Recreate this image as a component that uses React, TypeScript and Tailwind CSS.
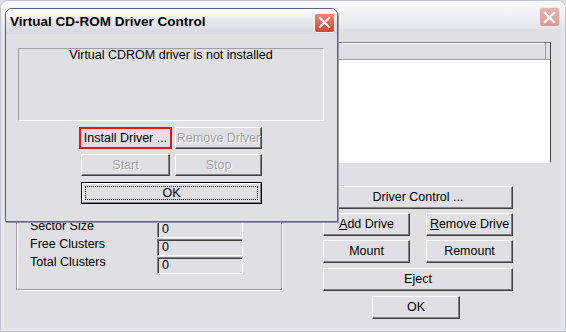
import type { ReactNode } from 'react';

function Btn({
  children,
  className = '',
  disabled = false,
}: {
  children: ReactNode;
  className?: string;
  disabled?: boolean;
}) {
  return (
    <div
      className={`flex items-center justify-center bg-[#e0dfe3] border border-t-white border-l-white border-r-[#404040] border-b-[#404040] shadow-[inset_-1px_-1px_0_#808080] ${
        disabled ? 'text-[#a0a0a0] [text-shadow:1px_1px_0_#ffffff]' : 'text-black'
      } ${className}`}
    >
      {children}
    </div>
  );
}

function DefaultBtn({ children, className = '' }: { children: ReactNode; className?: string }) {
  return (
    <div className={`flex border border-black ${className}`}>
      <div className="relative flex flex-1 items-center justify-center bg-[#e0dfe3] border border-t-white border-l-white border-r-[#808080] border-b-[#808080]">
        <span className="absolute inset-[2px] border border-dotted border-black" />
        <span className="relative">{children}</span>
      </div>
    </div>
  );
}

function CloseX({ faded = false }: { faded?: boolean }) {
  return (
    <div
      className={`flex items-center justify-center w-[21px] h-[20px] rounded-[3px] border ${
        faded
          ? 'border-[#f4e4e4] bg-[linear-gradient(to_bottom,#e8b4b0,#d89890)]'
          : 'border-[#f2f2f2] bg-[linear-gradient(to_bottom,#e98a78,#d0452f)]'
      }`}
    >
      <svg width="13" height="13" viewBox="0 0 13 13">
        <path d="M2 2L11 11M11 2L2 11" stroke="white" strokeWidth="2.2" strokeLinecap="square" />
      </svg>
    </div>
  );
}

function Field({ label, value }: { label: string; value: string }) {
  return (
    <div className="flex items-start h-[17px]">
      <span className="w-[127px] leading-[10px]">{label}</span>
      <div className="w-[86px] h-[17px] border border-t-[#808080] border-l-[#808080] border-r-white border-b-white shadow-[inset_1px_1px_0_#404040] pl-[4px] leading-[15px]">
        {value}
      </div>
    </div>
  );
}

export default function App() {
  return (
    <div className="relative w-[566px] h-[332px] overflow-hidden bg-[#e0dfe3] font-['Liberation_Sans',Arial,sans-serif] text-[12.5px] text-black">
      {/* Background window (inactive) */}
      <div className="flex flex-col w-full h-full rounded-t-[8px] border border-[#c4c4d0]">
        <div className="flex justify-end items-start h-[28px] pt-[6px] pr-[5px] rounded-t-[7px] bg-[linear-gradient(to_bottom,#fdfdfe,#eeeef3_60%,#e4e4eb)]">
          <CloseX faded />
        </div>
        <div className="flex flex-1 border-x-[3px] border-b-[3px] border-[#e6e6ec] bg-[#e0dfe3]">
          {/* Left column */}
          <div className="w-[319px] pl-[12px] pt-[12px]">
            <div className="flex flex-col justify-end w-[266px] h-[249px] border border-[#a0a0a0] shadow-[1px_1px_0_#ffffff,inset_1px_1px_0_#ffffff] pl-[13px] pb-[15px] gap-[1px]">
              <Field label="Sector Size" value="0" />
              <Field label="Free Clusters" value="0" />
              <Field label="Total Clusters" value="0" />
            </div>
          </div>

          {/* Right column */}
          <div className="flex flex-col pt-[13px]">
            <div className="w-[228px] h-[121px] border border-t-[#808080] border-l-[#808080] border-r-[#404040] border-b-white bg-white">
              <div className="flex h-[17px] bg-[#e0dfe3] border-b border-[#a0a0a0]">
                <div className="w-[222px] border-r border-[#a0a0a0] shadow-[inset_1px_1px_0_#ffffff]" />
              </div>
            </div>

            <div className="flex flex-col w-[190px] mt-[23px]">
              <Btn className="h-[23px]">Driver Control ...</Btn>
              <div className="flex justify-between mt-[4px]">
                <Btn className="w-[87px] h-[23px]">
                  <span className="underline">A</span>dd Drive
                </Btn>
                <Btn className="w-[87px] h-[23px]">
                  <span className="underline">R</span>emove Drive
                </Btn>
              </div>
              <div className="flex justify-between mt-[4px]">
                <Btn className="w-[87px] h-[23px]">Mount</Btn>
                <Btn className="w-[87px] h-[23px]">Remount</Btn>
              </div>
              <Btn className="h-[23px] mt-[5px]">Eject</Btn>
              <Btn className="w-[88px] h-[23px] mt-[5px] ml-[49px]">OK</Btn>
            </div>
          </div>
        </div>
      </div>

      {/* Front dialog: Virtual CD-ROM Driver Control */}
      <div className="absolute left-[5px] top-[8px] flex flex-col w-[333px] h-[214px] rounded-t-[7px] border border-[#5c6079] bg-[#e0dfe3] shadow-[1px_1px_0_#9a9aa8]">
        <div className="flex items-center justify-between h-[25px] pt-[2px] pl-[4px] pr-[2px] rounded-t-[6px] bg-[linear-gradient(to_bottom,#ffffff,#e9e9f0_45%,#d6d6e0)]">
          <span className="font-bold text-[13.5px] text-black">Virtual CD-ROM Driver Control</span>
          <CloseX />
        </div>
        <div className="flex flex-col flex-1 px-[3px] pb-[3px]">
          <div className="flex justify-center w-[306px] h-[73px] ml-[9px] mt-[14px] leading-[12px] border border-t-[#a0a0a0] border-l-[#a0a0a0] border-r-white border-b-white">
            Virtual CDROM driver is not installed
          </div>

          <div className="flex flex-col w-[181px] ml-[72px] mt-[6px]">
            <div className="flex h-[22px]">
              <div className="flex items-center justify-center w-[93px] -ml-[2px] border-2 border-[#e3141c] bg-[#e0dfe3]">
                Install Driver ...
              </div>
              <Btn disabled className="w-[87px] ml-[3px]">
                Remove Driver
              </Btn>
            </div>
            <div className="flex h-[22px] mt-[5px]">
              <Btn disabled className="w-[89px]">
                Start
              </Btn>
              <Btn disabled className="w-[87px] ml-[5px]">
                Stop
              </Btn>
            </div>
            <DefaultBtn className="h-[22px] mt-[6px]">OK</DefaultBtn>
          </div>
        </div>
      </div>
    </div>
  );
}
